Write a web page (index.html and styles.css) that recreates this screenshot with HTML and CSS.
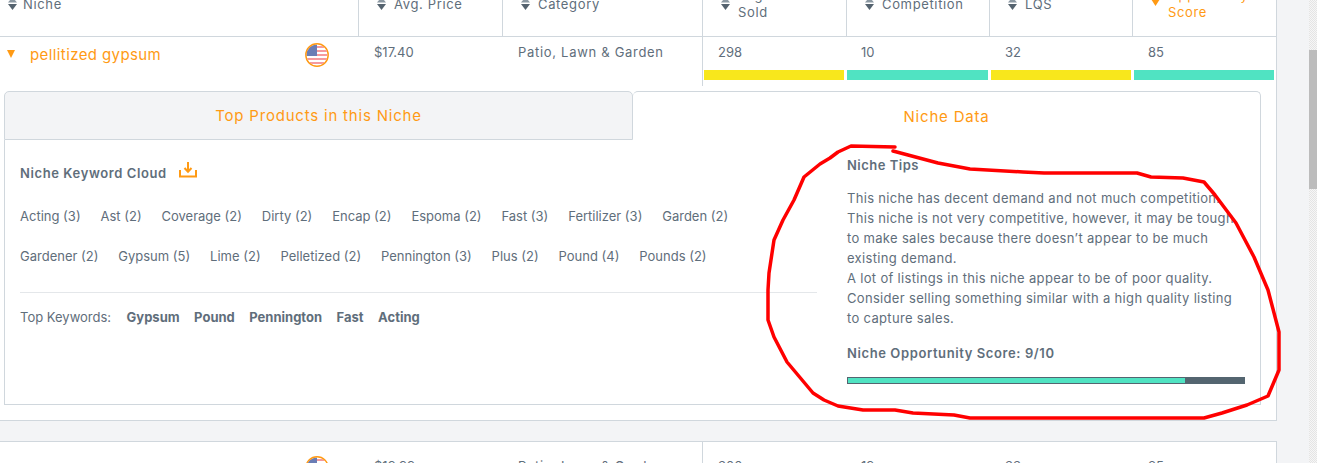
FILE: index.html
```html
<!DOCTYPE html>
<html>
<head>
  <meta charset="UTF-8">
  <title>Niche Finder</title>
  <link rel="stylesheet" href="styles.css">
</head>
<body>
  <div class="page">
    <div class="results">
      <!-- table head, scrolled partly out of view -->
      <div class="row head-row">
        <div class="head-cell">
          <svg class="sort" viewBox="0 0 9 16"><path d="M4.500 1 9 6.500H0z" fill="#8a97a1"/><path d="M4.500 14 9 8H0z" fill="#55636f"/></svg>
          <span>Niche</span>
        </div>
        <div class="head-cell line">
          <svg class="sort" viewBox="0 0 9 16"><path d="M4.500 1 9 6.500H0z" fill="#8a97a1"/><path d="M4.500 14 9 8H0z" fill="#55636f"/></svg>
          <span>Avg. Price</span>
        </div>
        <div class="head-cell line">
          <svg class="sort" viewBox="0 0 9 16"><path d="M4.500 1 9 6.500H0z" fill="#8a97a1"/><path d="M4.500 14 9 8H0z" fill="#55636f"/></svg>
          <span>Category</span>
        </div>
        <div class="head-cell line">
          <svg class="sort" viewBox="0 0 9 16"><path d="M4.500 1 9 6.500H0z" fill="#8a97a1"/><path d="M4.500 14 9 8H0z" fill="#55636f"/></svg>
          <span>Avg. Units<br>Sold</span>
        </div>
        <div class="head-cell line">
          <svg class="sort" viewBox="0 0 9 16"><path d="M4.500 1 9 6.500H0z" fill="#8a97a1"/><path d="M4.500 14 9 8H0z" fill="#55636f"/></svg>
          <span>Competition</span>
        </div>
        <div class="head-cell line">
          <svg class="sort" viewBox="0 0 9 16"><path d="M4.500 1 9 6.500H0z" fill="#8a97a1"/><path d="M4.500 14 9 8H0z" fill="#55636f"/></svg>
          <span>LQS</span>
        </div>
        <div class="head-cell line active">
          <svg class="sort" viewBox="0 0 9 16"><path d="M4.500 10 9 3H0z" fill="#ff9a14"/></svg>
          <span>Opportunity<br>Score</span>
        </div>
      </div>

      <!-- opened niche -->
      <div class="niche">
        <div class="row data-row">
          <div class="name-cell">
            <span class="caret"></span>
            <a class="niche-name">pellitized gypsum</a>
            <svg class="flag" viewBox="0 0 24 24">
              <clipPath id="round"><circle cx="12" cy="12" r="10.500"/></clipPath>
              <g clip-path="url(#round)">
                <rect width="24" height="24" fill="#fff"/>
                <path d="M0 3h24v2H0zM0 7h24v2H0zM0 11h24v2H0zM0 15h24v2H0zM0 19h24v2H0z" fill="#f59a9e"/>
                <rect width="12" height="13" fill="#6a7db5"/>
              </g>
              <circle cx="12" cy="12" r="11.200" fill="none" stroke="#ff9a14" stroke-width="1.400"/>
            </svg>
          </div>
          <div class="value-cell">$17.40</div>
          <div class="value-cell category">Patio, Lawn &amp; Garden</div>
          <div class="metric"><span>298</span><i class="meter yellow"></i></div>
          <div class="metric"><span>10</span><i class="meter teal"></i></div>
          <div class="metric"><span>32</span><i class="meter yellow"></i></div>
          <div class="metric"><span>85</span><i class="meter teal"></i></div>
        </div>

        <div class="detail">
          <div class="tabs">
            <div class="tab">Top Products in this Niche</div>
            <div class="tab current">Niche Data</div>
          </div>
          <div class="detail-body">
            <div class="cloud-col">
              <h4 class="cloud-title">
                Niche Keyword Cloud
                <svg class="download" viewBox="0 0 18 16"><path d="M9 0v9M5.500 6 9 9.800 12.500 6" fill="none" stroke="#ff9a14" stroke-width="2"/><path d="M1 8v6.500h16V8" fill="none" stroke="#ff9a14" stroke-width="2"/></svg>
              </h4>
              <div class="cloud">
                <span>Acting (3)</span><span>Ast (2)</span><span>Coverage (2)</span><span>Dirty (2)</span><span>Encap (2)</span><span>Espoma (2)</span><span>Fast (3)</span><span>Fertilizer (3)</span><span>Garden (2)</span>
                <span>Gardener (2)</span><span>Gypsum (5)</span><span>Lime (2)</span><span>Pelletized (2)</span><span>Pennington (3)</span><span>Plus (2)</span><span>Pound (4)</span><span>Pounds (2)</span>
              </div>
              <div class="top-keywords">
                <span class="top-label">Top Keywords:</span>
                <b>Gypsum</b><b>Pound</b><b>Pennington</b><b>Fast</b><b>Acting</b>
              </div>
            </div>
            <div class="tips-col">
              <h4 class="tips-title">Niche Tips</h4>
              <p class="tips">This niche has decent demand and not much competition.<br>
              This niche is not very competitive, however, it may be tough<br>
              to make sales because there doesn’t appear to be much<br>
              existing demand.<br>
              A lot of listings in this niche appear to be of poor quality.<br>
              Consider selling something similar with a high quality listing<br>
              to capture sales.</p>
              <h4 class="score-title">Niche Opportunity Score: 9/10</h4>
              <div class="score-bar"><div class="score-fill"></div></div>
            </div>
          </div>
        </div>
      </div>

      <!-- next niche, cut off by the window -->
      <div class="gap"></div>
      <div class="row data-row next">
        <div class="name-cell">
          <svg class="flag" viewBox="0 0 24 24">
            <g clip-path="url(#round)">
              <rect width="24" height="24" fill="#fff"/>
              <path d="M0 3h24v2H0zM0 7h24v2H0z" fill="#f59a9e"/>
              <rect width="12" height="13" fill="#6a7db5"/>
            </g>
            <circle cx="12" cy="12" r="11.200" fill="none" stroke="#ff9a14" stroke-width="1.400"/>
          </svg>
        </div>
        <div class="value-cell">$19.99</div>
        <div class="value-cell category">Patio, Lawn &amp; Garden</div>
        <div class="metric"><span>300</span></div>
        <div class="metric"><span>19</span></div>
        <div class="metric"><span>33</span></div>
        <div class="metric"><span>85</span></div>
      </div>
    </div>
    <div class="scrollbar"><div class="thumb"></div></div>
  </div>

  <!-- red marker ring drawn over the screenshot -->
  <svg class="marker" viewBox="0 0 1317 463">
    <path d="M895 147 851 146 838 152 830 158 820 164 804 177 794 200 783 220 774 240 769 273 768 290 768 320 774 337 787 362 813 393 824 400 838 406 863 410 895 410 913 413 954 415 970 418 1204 418 1222 413 1247 405 1268 396 1279 370 1279 332 1268 290 1254 257 1236 223 1215 195 1204 182 1183 178 1151 177 1137 173 1044 173 1023 172 970 169 938 163 893 151"/>
  </svg>
</body>
</html>
```

FILE: styles.css
```css
html, body {
  margin: 0;
  height: 100%;
  overflow: hidden;
}

body {
  font-family: Inter, "Open Sans", sans-serif;
  font-size: 13px;
  color: #5f6e7b;
  background-color: #f3f4f6;
  position: relative;
}

.page {
  display: flex;
  justify-content: space-between;
  height: 100%;
}

.results {
  width: 1277px;
  flex-shrink: 0;
}

.row {
  display: grid;
  grid-template-columns: 358px 144px 200px 144px 143px 143px 144px;
  background-color: #fff;
  border-right: 1px solid #d0d7dd;
}

/* head */
.head-row {
  height: 64px;
  margin-top: -28px;
  border-bottom: 1px solid #d0d7dd;
}

.head-cell {
  display: flex;
  align-items: center;
  padding-left: 8px;
  gap: 6px;
  line-height: 17px;
  letter-spacing: 0.65px;
}

.head-cell.line {
  border-left: 1px solid #d0d7dd;
  padding-left: 18px;
  gap: 8px;
}

.head-cell.active {
  color: #ff9a14;
}

.sort {
  width: 9px;
  height: 16px;
  flex-shrink: 0;
}

/* niche row */
.data-row {
  height: 49px;
}

.name-cell {
  display: flex;
  align-items: center;
  height: 34px;
  padding: 0 29px 0 7px;
}

.caret {
  width: 0;
  height: 0;
  border-left: 4.5px solid transparent;
  border-right: 4.5px solid transparent;
  border-top: 8px solid #ff9a14;
  margin-right: 15px;
}

.niche-name {
  font-size: 15px;
  letter-spacing: 0.4px;
  color: #ff9a14;
}

.flag {
  width: 24px;
  height: 24px;
  margin-left: auto;
  margin-top: 2px;
  flex-shrink: 0;
}

.value-cell {
  padding: 7px 0 0 16px;
  line-height: 16px;
}

.category {
  letter-spacing: 0.7px;
}

.metric {
  display: flex;
  flex-direction: column;
  padding-top: 7px;
  line-height: 16px;
}

.metric span {
  padding-left: 15px;
}

.metric:nth-child(n+6) span {
  padding-left: 16px;
}

.meter {
  display: block;
  height: 10px;
  margin: 10px 1px 0;
}

.metric:nth-child(4) .meter { margin-right: 2px; }
.metric:nth-child(6) .meter { margin-left: 2px; }
.metric:nth-child(7) .meter { margin-left: 2px; margin-right: 2px; }

.yellow { background-color: #f8e71c; }
.teal { background-color: #50e3c2; }

.data-row .metric:nth-child(4) {
  border-left: 1px solid #d0d7dd;
}

.niche {
  background-color: #fff;
  border-bottom: 1px solid #d0d7dd;
  border-right: 1px solid #d0d7dd;
  padding-bottom: 15px;
}

.niche .row {
  border-right: none;
}

/* tabs and panel */
.detail {
  margin: 5px 15px 0 4px;
}

.tabs {
  display: grid;
  grid-template-columns: 629px 1fr;
  height: 49px;
}

.tab {
  display: flex;
  align-items: center;
  justify-content: center;
  font-size: 15px;
  letter-spacing: 0.8px;
  color: #ff9a14;
  background-color: #f3f4f6;
  border: 1px solid #d0d7dd;
  border-radius: 5px 5px 0 0;
}

.tab.current {
  background-color: #fff;
  border-left: none;
  border-bottom: none;
}

.detail-body {
  display: flex;
  height: 264px;
  border: 1px solid #d0d7dd;
  border-top: none;
  padding: 0 15px;
}

.cloud-col {
  width: 797px;
  margin-right: 30px;
}

.cloud-title {
  display: flex;
  align-items: center;
  gap: 12px;
  margin: 23px 0 13px;
  font-size: 13px;
  font-weight: 600;
  letter-spacing: 0.6px;
  line-height: 20px;
}

.download {
  width: 18px;
  height: 16px;
  margin-top: -6px;
}

.cloud {
  display: flex;
  flex-wrap: wrap;
  column-gap: 19.85px;
  padding-bottom: 16px;
  border-bottom: 1px solid #e4e7ea;
}

.cloud span {
  line-height: 40px;
}

.top-keywords {
  display: flex;
  gap: 14.5px;
  margin-top: 14px;
  line-height: 20px;
}

.top-label {
  margin-right: 1px;
}

.top-keywords b {
  font-weight: 700;
}

.tips-col {
  width: 398px;
}

.tips-title {
  margin: 15px 0 13px;
  font-size: 13px;
  font-weight: 600;
  letter-spacing: 0.5px;
  line-height: 20px;
}

.tips {
  margin: 0 0 15px;
  letter-spacing: 0.32px;
  line-height: 20px;
  white-space: nowrap;
}

.score-title {
  margin: 0 0 14px;
  font-size: 13px;
  font-weight: 600;
  letter-spacing: 0.6px;
  line-height: 20px;
}

.score-bar {
  height: 5px;
  padding: 1px;
  background-color: #546570;
}

.score-fill {
  height: 5px;
  width: 337px;
  background-color: #50e3c2;
}

/* next row */
.gap {
  height: 20px;
}

.next {
  border-top: 1px solid #d0d7dd;
}

.next .name-cell {
  align-items: flex-start;
  padding-top: 14px;
}

.next .flag {
  margin-top: 0;
}

.next .value-cell, .next .metric {
  padding-top: 16px;
}

/* window scrollbar */
.scrollbar {
  width: 8px;
  background: repeating-conic-gradient(#e4e4e4 0 25%, #f6f6f6 0 50%) 0 0 / 2px 2px;
}

.thumb {
  height: 139px;
  margin-top: 50px;
  background-color: #bcbcbc;
}

.marker {
  position: absolute;
  top: 0;
  left: 0;
  width: 1317px;
  height: 463px;
  pointer-events: none;
}

.marker path {
  fill: none;
  stroke: #f00;
  stroke-width: 3.5;
  stroke-linejoin: round;
  stroke-linecap: round;
}
```
